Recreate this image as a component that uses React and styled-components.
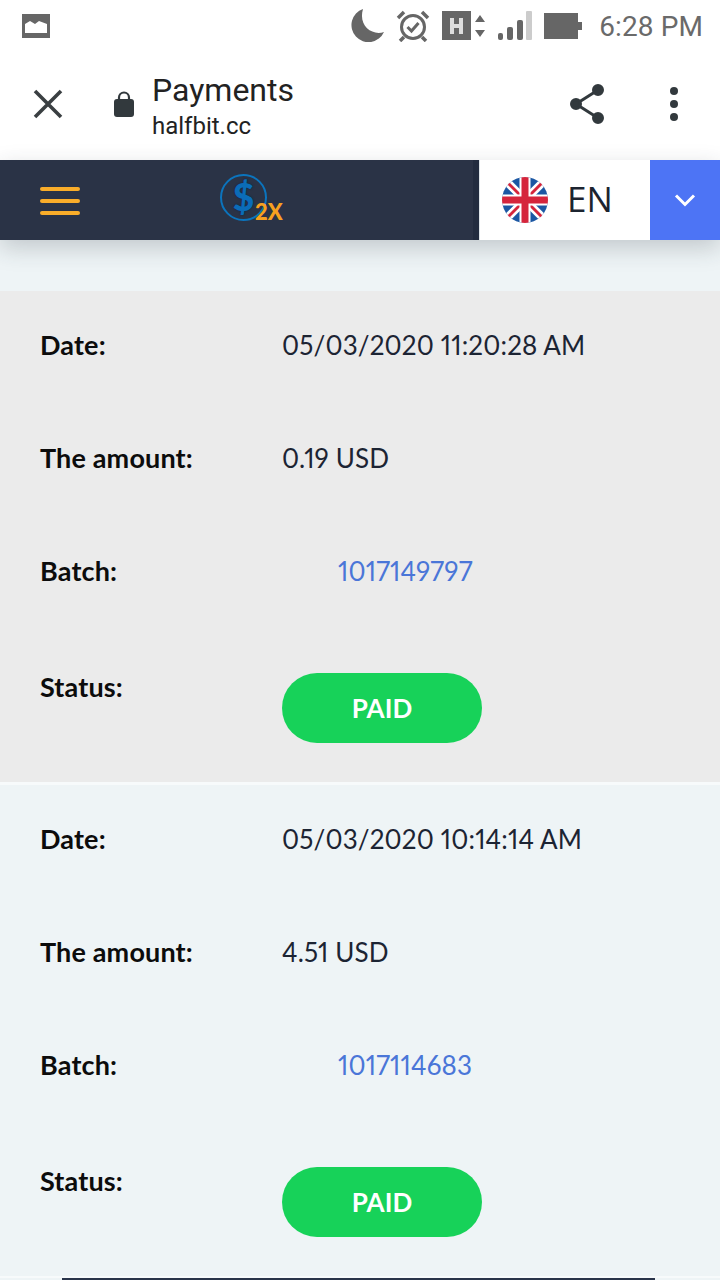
import styled, { createGlobalStyle } from 'styled-components';

const GlobalStyle = createGlobalStyle`
  html, body {
    margin: 0;
    padding: 0;
    background: #eef4f6;
    font-family: 'Lato', 'Liberation Sans', sans-serif;
  }
`;

const Page = styled.div`
  width: 720px;
  height: 1280px;
  overflow: hidden;
  display: flex;
  flex-direction: column;
  background: #eef4f6;
`;

const StatusBar = styled.div`
  height: 56px;
  flex: none;
  display: flex;
  align-items: center;
  padding: 0 17px 4px 22px;
  box-sizing: border-box;
  background: #fff;
`;

const StatusIcons = styled.div`
  margin-left: auto;
  display: flex;
  align-items: center;
  gap: 12px;
`;

const Clock = styled.span`
  font: 400 28px 'Roboto', sans-serif;
  letter-spacing: 0.1px;
  color: #6a6a6a;
  margin-left: 5px;
`;

const Toolbar = styled.div`
  height: 104px;
  flex: none;
  display: flex;
  align-items: center;
  padding: 0 42px 8px 32px;
  box-sizing: border-box;
  background: #fff;
`;

const Lock = styled.svg`
  margin-left: 50px;
  margin-right: 18px;
`;

const TitleBlock = styled.div`
  display: flex;
  flex-direction: column;
  margin-top: 6px;
  font-family: 'Roboto', sans-serif;
  color: #222;
`;

const Title = styled.span`
  font-size: 32px;
  line-height: 38px;
`;

const Url = styled.span`
  font-size: 24px;
  line-height: 34px;
`;

const ToolbarActions = styled.div`
  margin-left: auto;
  display: flex;
  align-items: center;
  gap: 64px;
`;

const Nav = styled.div`
  height: 80px;
  flex: none;
  display: flex;
  background: #2a3346;
  box-shadow: 0 8px 22px rgba(40, 50, 60, 0.22);
  position: relative;
`;

const Burger = styled.div`
  margin: 27px 0 0 40px;
  width: 40px;
  display: flex;
  flex-direction: column;
  gap: 8px;
`;

const BurgerLine = styled.span`
  display: block;
  height: 4px;
  border-radius: 2px;
  background: #f9ad2a;
`;

const Logo = styled.div`
  margin-left: 140px;
  width: 68px;
  height: 56px;
  margin-top: 14px;
  position: relative;
`;

const LogoRing = styled.div`
  width: 47px;
  height: 47px;
  border: 2px solid #0b74bd;
  border-radius: 50%;
  box-sizing: border-box;
  color: #0b6cb8;
  font: 900 37px/41px 'Lato', sans-serif;
  text-shadow: 0 0 2px #06244a;
  text-align: center;
`;

const LogoBadge = styled.span`
  position: absolute;
  left: 35px;
  top: 25px;
  font: 900 22px/26px 'Lato', sans-serif;
  color: #f7a11f;
`;

const LangGroup = styled.div`
  margin-left: auto;
  display: flex;
  border-left: 6px solid #222c3f;
`;

const LangBox = styled.div`
  width: 171px;
  border-left: 1px solid #dfe6ea;
  box-sizing: border-box;
  background: #fff;
  display: flex;
  align-items: center;
  padding-left: 22px;
  gap: 19px;
`;

const LangName = styled.span`
  font: 400 35px 'Open Sans', sans-serif;
  color: #1c2430;
  margin-top: -4px;
`;

const LangToggle = styled.div`
  width: 70px;
  background: #4d74f5;
  display: flex;
  align-items: center;
  justify-content: center;
`;

const Content = styled.div`
  padding-top: 51px;
  display: flex;
  flex-direction: column;
`;

const Card = styled.div`
  padding: 39px 40px;
  background: ${(p) => (p.$shaded ? '#ebebeb' : '#eef4f6')};
  border-bottom: ${(p) => (p.$shaded ? '3px' : '2px')} solid #f7fafb;
`;

const Row = styled.div`
  display: flex;
  align-items: flex-start;
  padding-bottom: 83px;
  line-height: 30px;
  font-size: 26px;
  font-variant-numeric: proportional-nums;

  &:last-child {
    padding-top: 4px;
    padding-bottom: 0;
  }
`;

const Label = styled.div`
  width: 243px;
  flex: none;
  font-size: 27px;
  font-weight: 700;
  letter-spacing: 0.15px;
  color: #0c0c0c;
`;

const StatusLabel = styled(Label)`
  margin-top: -1px;
`;

const Value = styled.div`
  margin-left: -1px;
  letter-spacing: 0.15px;
  color: #1c2433;
`;

const BatchLink = styled.a`
  margin-left: 55px;
  letter-spacing: 0.15px;
  color: #4a76d8;
`;

const PaidPill = styled.div`
  width: 200px;
  height: 70px;
  margin-left: -1px;
  border-radius: 35px;
  background: #17d259;
  color: #fff;
  font-weight: 700;
  display: flex;
  align-items: center;
  justify-content: center;
`;

const BottomEdge = styled.div`
  height: 2px;
  margin: 0 65px 0 62px;
  background: #29344a;
  flex: none;
`;

const payments = [
  { id: 1, date: '05/03/2020 11:20:28 AM', amount: '0.19 USD', batch: '1017149797', shaded: true },
  { id: 2, date: '05/03/2020 10:14:14 AM', amount: '4.51 USD', batch: '1017114683', shaded: false },
];

function UkFlag() {
  return (
    <svg width="46" height="46" viewBox="0 0 46 46">
      <defs>
        <clipPath id="flagClip">
          <circle cx="23" cy="23" r="23" />
        </clipPath>
      </defs>
      <g clipPath="url(#flagClip)">
        <rect width="46" height="46" fill="#1b57a3" />
        <path d="M0 0L46 46M46 0L0 46" stroke="#fff" strokeWidth="8" />
        <path d="M0 0L46 46M46 0L0 46" stroke="#d5253c" strokeWidth="3" />
        <path d="M23 0V46M0 23H46" stroke="#fff" strokeWidth="11" />
        <path d="M23 0V46M0 23H46" stroke="#d5253c" strokeWidth="7" />
      </g>
    </svg>
  );
}

function App() {
  return (
    <Page>
      <GlobalStyle />
      <StatusBar>
        <svg width="28" height="24" viewBox="0 0 28 24">
          <path fill="#666" d="M0 0h28v24H0z" />
          <path fill="#fff" d="M3 19V10l5-3 5 3 4-3 8 3v9z" />
        </svg>
        <StatusIcons>
          <svg width="34" height="34" viewBox="0 0 34 34">
            <path fill="#666" d="M13 0A17 17 0 1 0 34 23C22 27 8 17 13 0z" />
          </svg>
          <svg width="34" height="32" viewBox="0 0 34 32" fill="none" stroke="#666">
            <circle cx="17" cy="17" r="11.5" strokeWidth="3" />
            <path d="M11.5 17l4 4 7-8" strokeWidth="3" />
            <path d="M2 8l6-6M32 8l-6-6M8 27l-4 4M26 27l4 4" strokeWidth="3.5" />
          </svg>
          <svg width="44" height="30" viewBox="0 0 44 30">
            <rect width="29" height="29" fill="#666" />
            <path fill="#ddd" d="M8 7h4v6h5V7h4v16h-4v-6h-5v6H8z" />
            <path fill="#666" d="M38 4l5 7H33zM38 26l-5-7h10z" />
          </svg>
          <svg width="34" height="30" viewBox="0 0 34 30">
            <rect x="0" y="22" width="5" height="7" rx="2" fill="#666" />
            <rect x="9" y="16" width="6" height="13" rx="2" fill="#666" />
            <rect x="19" y="9" width="6" height="20" rx="2" fill="#666" />
            <rect x="28" y="0" width="6" height="29" rx="1" fill="#ccc" />
          </svg>
          <svg width="38" height="26" viewBox="0 0 38 26">
            <rect width="34" height="26" fill="#666" />
            <rect x="33" y="9" width="5" height="8" fill="#666" />
          </svg>
          <Clock>6:28 PM</Clock>
        </StatusIcons>
      </StatusBar>
      <Toolbar>
        <svg width="32" height="32" viewBox="0 0 32 32" stroke="#3a3f42" strokeWidth="3.6">
          <path d="M3 3l26 26M29 3L3 29" />
        </svg>
        <Lock width="20" height="26" viewBox="0 0 20 26">
          <path fill="none" stroke="#32393d" strokeWidth="2.2" d="M5 10V6.5a5 5 0 0 1 10 0V10" />
          <rect y="8" width="20" height="18" rx="3" fill="#32393d" />
        </Lock>
        <TitleBlock>
          <Title>Payments</Title>
          <Url>halfbit.cc</Url>
        </TitleBlock>
        <ToolbarActions>
          <svg width="38" height="42" viewBox="0 0 38 42" fill="#32393d" stroke="#32393d" strokeWidth="3">
            <path fill="none" d="M30 7L8 21l22 14" />
            <circle cx="30" cy="7" r="4.5" />
            <circle cx="8" cy="21" r="4.5" />
            <circle cx="30" cy="35" r="4.5" />
          </svg>
          <svg width="8" height="34" viewBox="0 0 8 34" fill="#32393d">
            <circle cx="4" cy="4" r="4" />
            <circle cx="4" cy="17" r="4" />
            <circle cx="4" cy="30" r="4" />
          </svg>
        </ToolbarActions>
      </Toolbar>
      <Nav>
        <Burger>
          <BurgerLine />
          <BurgerLine />
          <BurgerLine />
        </Burger>
        <Logo>
          <LogoRing>$</LogoRing>
          <LogoBadge>2X</LogoBadge>
        </Logo>
        <LangGroup>
          <LangBox>
            <UkFlag />
            <LangName>EN</LangName>
          </LangBox>
          <LangToggle>
            <svg width="22" height="14" viewBox="0 0 22 14" fill="none" stroke="#fff" strokeWidth="3">
              <path d="M2 2.5l9 9 9-9" />
            </svg>
          </LangToggle>
        </LangGroup>
      </Nav>
      <Content>
        {payments.map(({ id, date, amount, batch, shaded }) => (
          <Card key={id} $shaded={shaded}>
            <Row>
              <Label>Date:</Label>
              <Value>{date}</Value>
            </Row>
            <Row>
              <Label>The amount:</Label>
              <Value>{amount}</Value>
            </Row>
            <Row>
              <Label>Batch:</Label>
              <BatchLink>{batch}</BatchLink>
            </Row>
            <Row>
              <StatusLabel>Status:</StatusLabel>
              <PaidPill>PAID</PaidPill>
            </Row>
          </Card>
        ))}
      </Content>
      <BottomEdge />
    </Page>
  );
}

export default App;
